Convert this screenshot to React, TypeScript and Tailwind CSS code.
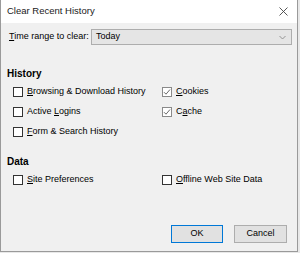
const font = { fontFamily: '"Liberation Sans", Arial, sans-serif' };

function Mn({ text, at }: { text: string; at: number }) {
  return (
    <span>
      {text.slice(0, at)}
      <span className="underline underline-offset-[1px]">{text[at]}</span>
      {text.slice(at + 1)}
    </span>
  );
}

function Check({ label, at, checked }: { label: string; at: number; checked?: boolean }) {
  return (
    <div className="flex h-[20px] items-center">
      <div
        className={`flex h-[10px] w-[10px] items-center justify-center bg-white border ${
          checked ? 'border-[#8a8a8a]' : 'border-[#333333]'
        }`}
      >
        {checked && (
          <svg width="8" height="8" viewBox="0 0 8 8" fill="none">
            <path d="M1 4.2 L3 6.2 L7 1.5" stroke="#6a6a6a" strokeWidth="1" />
          </svg>
        )}
      </div>
      <span className="ml-[4px] text-[9px] text-black">
        <Mn text={label} at={at} />
      </span>
    </div>
  );
}

export default function App() {
  return (
    <div className="w-[300px] h-[253px] bg-[#e8e8e8]" style={font}>
      <div className="w-[298px] h-[252px] flex flex-col border-x border-b border-[#9a9a9a] bg-[#f0f0f0]">
        {/* Title bar */}
        <div className="h-[23px] shrink-0 bg-white flex items-center justify-between pl-[6px] pr-[9px]">
          <span className="text-[9.5px] text-[#1a1a1a]">Clear Recent History</span>
          <svg width="9" height="9" viewBox="0 0 9 9">
            <path d="M0.5 0.5 L8.5 8.5 M8.5 0.5 L0.5 8.5" stroke="#444" strokeWidth="0.9" />
          </svg>
        </div>

        {/* Time range */}
        <div className="mt-[6px] h-[16px] flex items-center pl-[8px] pr-[5px]">
          <span className="text-[9px] text-black w-[82px]">
            <Mn text="Time range to clear:" at={0} />
          </span>
          <div className="flex-1 h-[16px] bg-[#e5e5e5] border border-[#adadad] flex items-center justify-between pl-[4px] pr-[5px]">
            <span className="text-[9px] text-black">Today</span>
            <svg width="7" height="5" viewBox="0 0 7 5" fill="none">
              <path d="M0.5 1 L3.5 4 L6.5 1" stroke="#8a8a8a" strokeWidth="0.9" />
            </svg>
          </div>
        </div>

        {/* History */}
        <div className="mt-[22px] h-[12px] flex items-center pl-[6px] text-[10px] font-bold text-black">
          History
        </div>
        <div className="mt-[3px] grid grid-cols-[149px_1fr] pl-[12px]">
          <div className="flex flex-col">
            <Check label="Browsing & Download History" at={0} />
            <Check label="Active Logins" at={7} />
            <Check label="Form & Search History" at={0} />
          </div>
          <div className="flex flex-col">
            <Check label="Cookies" at={0} checked />
            <Check label="Cache" at={1} checked />
          </div>
        </div>

        {/* Data */}
        <div className="mt-[13px] h-[12px] flex items-center pl-[6px] text-[10px] font-bold text-black">
          Data
        </div>
        <div className="mt-[3px] grid grid-cols-[149px_1fr] pl-[12px]">
          <Check label="Site Preferences" at={0} />
          <Check label="Offline Web Site Data" at={0} />
        </div>

        {/* Buttons */}
        <div className="mt-[35px] flex justify-end gap-[11px] pr-[10px]">
          <button className="w-[52px] h-[18px] bg-[#e1e1e1] border border-[#0078d7] text-[9px] text-black">
            OK
          </button>
          <button className="w-[53px] h-[18px] bg-[#e1e1e1] border border-[#adadad] text-[9px] text-black">
            Cancel
          </button>
        </div>
      </div>
    </div>
  );
}
